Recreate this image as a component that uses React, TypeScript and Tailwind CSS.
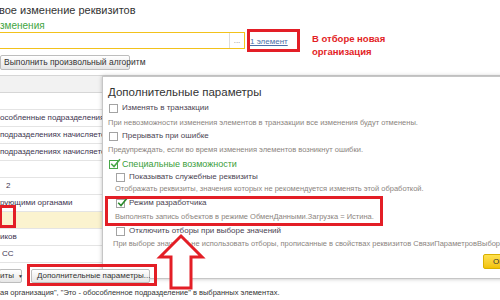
function Box({ checked, green }: { checked?: boolean; green?: boolean }) {
  return (
    <span
      className={
        green
          ? 'relative inline-block w-[9px] h-[9px] shrink-0 bg-white border border-[#49a849]'
          : 'relative inline-block w-[9px] h-[9px] shrink-0 bg-white border border-[#a3a3a3]'
      }
    >
      {checked && (
        <svg className="absolute left-[0px] top-[-3px] w-[11px] h-[11px]" viewBox="0 0 11 11">
          <path d="M1.2 5.8 L4 8.6 L10 1.2" fill="none" stroke={green ? '#49a849' : '#2b8a2b'} strokeWidth="1.6" />
        </svg>
      )}
    </span>
  );
}

function Check({ label, checked, green, className = '' }: { label: string; checked?: boolean; green?: boolean; className?: string }) {
  return (
    <div className={`flex items-center h-[12px] gap-[4px] ${className}`}>
      <Box checked={checked} green={green} />
      <span className={green ? 'text-[9px] leading-[12px] text-[#3a9e3a]' : 'text-[8px] leading-[12px] text-[#4b4452]'}>{label}</span>
    </div>
  );
}

function Hint({ text, className = '' }: { text: string; className?: string }) {
  return <div className={`h-[12px] text-[7.5px] leading-[12px] text-[#8b8580] whitespace-nowrap ${className}`}>{text}</div>;
}

const rows = [
  '',
  'особленные подразделения',
  'подразделениях начисляется',
  'подразделениях начисляется',
  '',
  '2',
  'рующими органами',
  '',
  'иков',
  'СС',
];

export default function App() {
  return (
    <div className="relative w-[500px] h-[300px] overflow-hidden bg-white font-['Liberation_Sans',Arial,sans-serif] text-[#333]">
      {/* main form */}
      <div className="flex flex-col">
        <div className="h-[20px] pt-[3px] text-[11px] leading-[14px] text-[#333] -ml-[1px] whitespace-nowrap">вое изменение реквизитов</div>
        <div className="h-[9px] text-[10px] leading-[11px] text-[#3fa53f] whitespace-nowrap">зменения</div>

        <div className="flex items-start h-[26px]">
          <div className="mt-[3px] w-[246px] h-[17px] border border-[#f2c21b] -ml-[1px] flex justify-end">
            <div className="w-[15px] h-full border-l border-[#dcdcdc] flex items-center justify-center text-[8px] text-[#888] leading-none">...</div>
          </div>
          <div className="ml-[2px] w-[53px] h-[23px] border-[3px] border-[#e31e26] flex items-center pt-[3px]">
            <span className="text-[8px] leading-[10px] text-[#4a6fa8] underline">1 элемент</span>
          </div>
          <div className="ml-[12px] mt-[3px] text-[9.5px] leading-[13px] font-bold text-[#e31e26]">
            <div>В отборе новая</div>
            <div>организация</div>
          </div>
        </div>

        <div className="flex">
          <div className="w-[130px] h-[15px] border border-[#bdbdbd] rounded-[2px] bg-gradient-to-b from-white to-[#e6e6e6] flex items-center pl-[3px] text-[8.5px] leading-none text-[#333] whitespace-nowrap">
            Выполнить произвольный алгоритм
          </div>
        </div>

        <div className="mt-[5px] flex flex-col">
          <div className="h-[18px] bg-[#f2f2f2] border-t border-b border-[#d6d6d6]" />
          {rows.map((r, i) => (
            <div
              key={i}
              className={
                i === 7
                  ? 'h-[17px] bg-[#fbf3cf] border-b border-[#e4e4e4]'
                  : 'h-[17px] border-b border-[#e4e4e4] flex items-center text-[8px] leading-none text-[#3d3550] whitespace-nowrap'
              }
            >
              {r === '2' ? <span className="pl-[6px]">2</span> : r === 'СС' ? <span className="pl-[2px]">СС</span> : r}
            </div>
          ))}
        </div>

        <div className="mt-[6px] flex gap-[9px] relative z-20">
          <div className="w-[23px] h-[14px] border border-[#bdbdbd] rounded-[2px] bg-gradient-to-b from-white to-[#e6e6e6] flex items-center text-[8px] leading-none text-[#333] whitespace-nowrap -ml-[1px]">
            иты <span className="ml-[4px] text-[5px]">▼</span>
          </div>
          <div className="w-[119px] h-[14px] border border-[#bdbdbd] rounded-[2px] bg-gradient-to-b from-white to-[#e6e6e6] flex items-center pl-[5px] text-[8px] leading-none text-[#333] whitespace-nowrap">
            Дополнительные параметры...
          </div>
        </div>

        <div className="mt-[5px] text-[7.5px] leading-[10px] text-[#333] whitespace-nowrap">
          ая организация", "Это - обособленное подразделение" в выбранных элементах.
        </div>
      </div>

      {/* popup */}
      <div className="absolute left-[102px] top-[76px] w-[420px] h-[203px] z-10 bg-white border border-[#c6c6c6] shadow-[0_0_4px_rgba(0,0,0,0.25)] pl-[6px] flex flex-col">
        <div className="h-[25px] pt-[8px] text-[11.5px] leading-[14px] text-[#333] -ml-[1px] whitespace-nowrap">Дополнительные параметры</div>
        <Check label="Изменять в транзакции" />
        <Hint className="mt-[3px] -ml-[1px]" text="При невозможности изменения элементов в транзакции все изменения будут отменены." />
        <Check className="mt-[1px]" label="Прерывать при ошибке" />
        <Hint className="mt-[2px] -ml-[1px]" text="Предупреждать, если во время изменения элементов возникнут ошибки." />
        <Check className="mt-[2px]" label="Специальные возможности" checked green />
        <Check className="mt-[1px] ml-[7px]" label="Показывать служебные реквизиты" />
        <Hint className="ml-[6px]" text="Отображать реквизиты, значения которых не рекомендуется изменять этой обработкой." />
        <Check className="mt-[2px] ml-[7px]" label="Режим разработчика" checked />
        <Hint className="mt-[2px] ml-[6px]" text="Выполнять запись объектов в режиме ОбменДанными.Загрузка = Истина." />
        <Check className="mt-[2px] ml-[7px]" label="Отключить отборы при выборе значений" />
        <Hint className="mt-[1px] ml-[4px]" text="При выборе значений не использовать отборы, прописанные в свойствах реквизитов СвязиПараметровВыбора." />
        <div className="mt-[4px] flex justify-end pr-[12px]">
          <div className="w-[26px] h-[15px] rounded-[2px] border border-[#d9b000] bg-gradient-to-b from-[#ffe14d] to-[#f2c200] flex items-center pl-[9px] text-[8px] leading-none text-[#333]">
            ОК
          </div>
        </div>
      </div>

      {/* annotations */}
      <div className="absolute left-[105px] top-[196px] w-[278px] h-[30px] border-[3px] border-[#e31e26] z-30" />
      <div className="absolute left-[-1px] top-[205px] w-[17px] h-[23px] border-[3px] border-[#e31e26] z-30" />
      <div className="absolute left-[27px] top-[264px] w-[130px] h-[22px] border-[3px] border-[#e31e26] z-30" />
      <svg className="absolute left-[156px] top-[233px] z-30" width="50" height="58" viewBox="0 0 50 58">
        <path d="M25 3 L46 24 L35 24 L35 55 L15 55 L15 24 L4 24 Z" fill="white" stroke="#e31e26" strokeWidth="3" strokeLinejoin="miter" />
      </svg>
    </div>
  );
}
